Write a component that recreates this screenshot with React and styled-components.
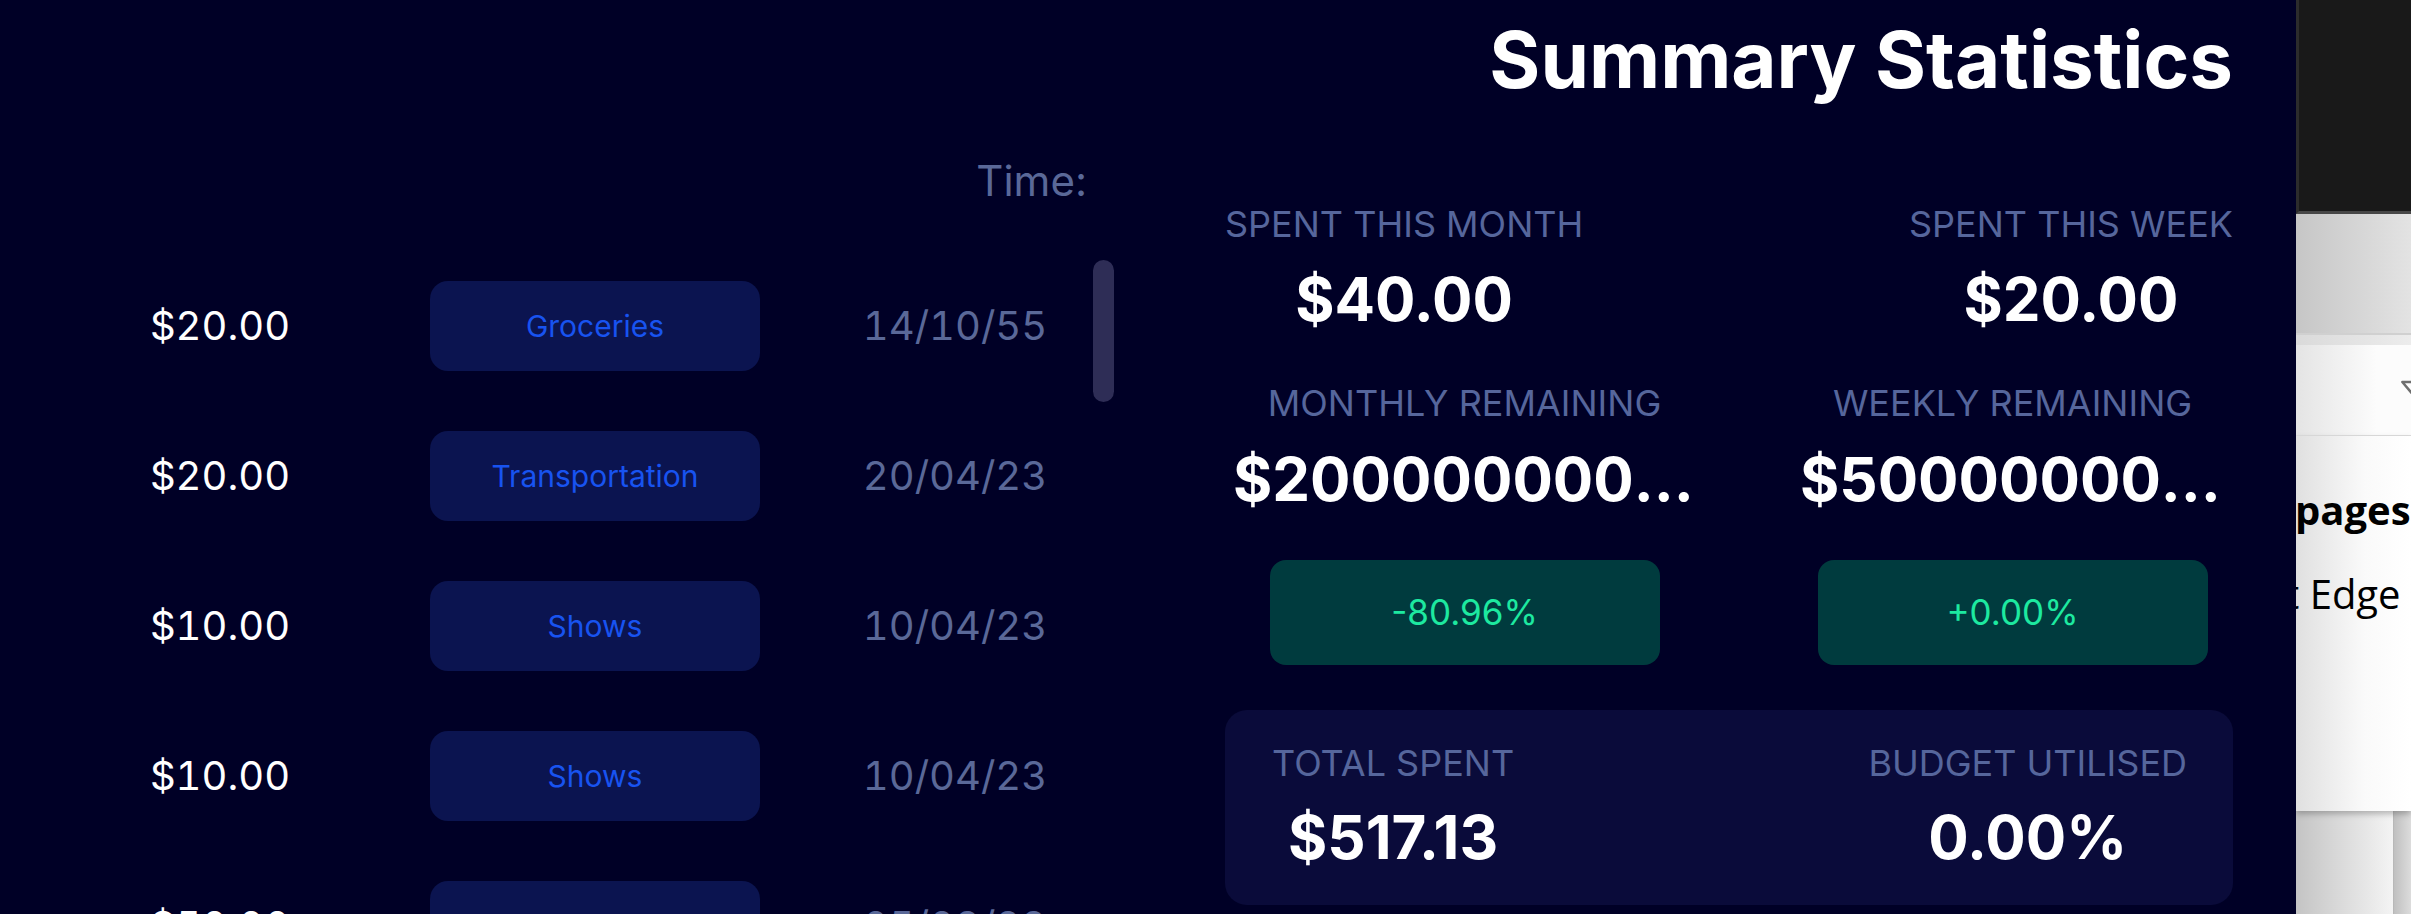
import React from "react";
import styled, { createGlobalStyle } from "styled-components";

const GlobalStyle = createGlobalStyle`
  html, body {
    margin: 0;
    padding: 0;
    background: #000026;
    overflow: hidden;
  }
  * { box-sizing: border-box; }
`;

const Screen = styled.div`
  display: flex;
  width: 2411px;
  height: 914px;
  overflow: hidden;
  font-family: Inter, "Liberation Sans", sans-serif;
`;

const Dashboard = styled.main`
  flex: 0 0 2296px;
  display: flex;
  height: 100%;
  background: #000026;
  color: #ffffff;
`;

const ListPanel = styled.section`
  flex: 0 0 1114px;
  display: flex;
  flex-direction: column;
  padding-top: 160px;
  height: 100%;
`;

const ListHeader = styled.div`
  display: flex;
  justify-content: flex-end;
  padding-right: 27px;
  font-size: 42px;
  line-height: 1;
  color: #5a6898;
`;

const ScrollFrame = styled.div`
  position: relative;
  margin-top: 58px;
  flex: 1;
  min-height: 0;
`;

const ScrollArea = styled.div`
  height: 100%;
  overflow-y: auto;
  scrollbar-width: none;
  &::-webkit-scrollbar {
    display: none;
  }
`;

const ScrollThumb = styled.div`
  position: absolute;
  top: 0;
  right: 0;
  width: 21px;
  height: 142px;
  border-radius: 11px;
  background: #2e2d56;
`;

const RowList = styled.div`
  display: flex;
  flex-direction: column;
  gap: 60px;
  padding: 21px 0 50px;
`;

const Row = styled.div`
  display: flex;
  align-items: center;
  height: 90px;
`;

const Amount = styled.div`
  flex: 0 0 400px;
  margin-left: 20px;
  text-align: center;
  font-size: 40px;
  line-height: 1;
  color: #ffffff;
  font-variant-numeric: tabular-nums;
`;

const CategoryBadge = styled.div`
  flex: 0 0 330px;
  height: 90px;
  margin-left: 10px;
  display: flex;
  align-items: center;
  justify-content: center;
  background: #0b1450;
  border-radius: 18px;
  color: #1853f0;
  font-size: 30px;
  line-height: 1;
`;

const DateCell = styled.div`
  flex: 0 0 270px;
  margin-left: 60px;
  text-align: center;
  font-size: 40px;
  line-height: 1;
  color: #5a6898;
  font-variant-numeric: tabular-nums;
`;

const StatsPanel = styled.section`
  flex: 0 0 1008px;
  margin-left: 111px;
  padding-top: 21px;
  display: flex;
  flex-direction: column;
`;

const Title = styled.h1`
  margin: 0;
  text-align: right;
  font-size: 78px;
  font-weight: 700;
  line-height: 1;
  color: #ffffff;
`;

const StatRow = styled.div`
  display: flex;
  justify-content: space-between;
  margin-top: ${(p) => p.$top}px;
  padding: ${(p) => p.$pad || "0"};
`;

const StatCell = styled.div`
  display: flex;
  flex-direction: column;
  align-items: center;
  width: ${(p) => (p.$width ? `${p.$width}px` : "auto")};
`;

const Label = styled.div`
  font-size: 36px;
  line-height: 1;
  color: #56669c;
  text-transform: uppercase;
  white-space: nowrap;
`;

const Value = styled.div`
  margin-top: ${(p) => p.$gap || 27}px;
  max-width: 100%;
  font-size: 60px;
  font-weight: 700;
  line-height: 1;
  color: #ffffff;
  white-space: nowrap;
  overflow: hidden;
  text-overflow: ellipsis;
`;

const ChangeBadge = styled.div`
  margin-top: 51px;
  width: 390px;
  height: 105px;
  display: flex;
  align-items: center;
  justify-content: center;
  background: #003b3e;
  border-radius: 16px;
  color: #1de9a0;
  font-size: 35px;
  line-height: 1;
`;

const TotalsCard = styled.div`
  margin-top: 45px;
  height: 195px;
  padding: 35px 46px 0 47px;
  display: flex;
  justify-content: space-between;
  align-items: flex-start;
  background: #0a0b3a;
  border-radius: 22px;
`;

const TotalsItem = styled.div`
  display: flex;
  flex-direction: column;
  align-items: center;
`;

/* background window peeking at the right edge */
const BackdropWindow = styled.aside`
  flex: 1;
  display: flex;
  flex-direction: column;
  height: 100%;
  overflow: hidden;
  font-family: "Open Sans", "Noto Sans", sans-serif;
  color: #000;
`;

const DarkTitleBar = styled.div`
  height: 214px;
  background: #191919;
  border-left: 3px solid #2c2c2c;
  border-bottom: 3px solid #474747;
`;

const GrayBar = styled.div`
  height: 119px;
  background: linear-gradient(to right, #c6c6c6, #e3e3e3);
`;

const Band = styled.div`
  height: 12px;
  background: linear-gradient(to right, #dadada, #ececec);
  border-top: 2px solid #d0d0d0;
`;

const Toolbar = styled.div`
  height: 91px;
  display: flex;
  align-items: flex-start;
  padding: 32px 0 0 103px;
  overflow: hidden;
  background: linear-gradient(to right, #e4e4e4, #fcfcfc 70%);
  border-bottom: 1px solid #dedede;
  color: #6e6e6e;
`;

const ToolIcon = styled.svg`
  flex: 0 0 auto;
  width: 40px;
  height: 40px;
`;

const DocContent = styled.div`
  height: 375px;
  padding-top: 54px;
  overflow: hidden;
  background: linear-gradient(to right, #e0e0e0, #fafafa 60%, #ffffff);
  box-shadow: 0 3px 6px rgba(0, 0, 0, 0.25);
  position: relative;
  z-index: 1;
`;

const DocHeading = styled.div`
  margin-left: -1px;
  font-size: 40px;
  font-weight: 700;
  line-height: 1;
  white-space: nowrap;
`;

const DocText = styled.div`
  margin-top: 44px;
  margin-left: -11px;
  font-size: 40px;
  line-height: 1;
  white-space: nowrap;
`;

const BottomStrip = styled.div`
  flex: 1;
  display: flex;
`;

const BottomLeft = styled.div`
  flex: 0 0 98px;
  background: linear-gradient(to right, #c4c4c4, #f4f4f4);
  border-right: 1px solid #b8b8b8;
`;

const BottomRight = styled.div`
  flex: 1;
  background: linear-gradient(to right, #c0c0c0, #dcdcdc);
`;

const transactions = [
  { amount: "$20.00", category: "Groceries", date: "14/10/55" },
  { amount: "$20.00", category: "Transportation", date: "20/04/23" },
  { amount: "$10.00", category: "Shows", date: "10/04/23" },
  { amount: "$10.00", category: "Shows", date: "10/04/23" },
  { amount: "$50.00", category: "Food", date: "05/03/23" },
  { amount: "$15.00", category: "Food", date: "02/03/23" },
  { amount: "$32.50", category: "Groceries", date: "28/02/23" },
  { amount: "$12.00", category: "Transportation", date: "25/02/23" },
  { amount: "$45.00", category: "Shows", date: "20/02/23" },
  { amount: "$8.99", category: "Food", date: "18/02/23" },
  { amount: "$60.00", category: "Groceries", date: "14/02/23" },
  { amount: "$22.40", category: "Transportation", date: "10/02/23" },
  { amount: "$30.00", category: "Shows", date: "07/02/23" },
  { amount: "$18.75", category: "Food", date: "03/02/23" },
  { amount: "$40.00", category: "Groceries", date: "30/01/23" },
  { amount: "$25.00", category: "Transportation", date: "26/01/23" },
  { amount: "$19.99", category: "Shows", date: "21/01/23" },
  { amount: "$27.50", category: "Food", date: "17/01/23" },
  { amount: "$30.00", category: "Groceries", date: "12/01/23" },
  { amount: "$20.00", category: "Transportation", date: "08/01/23" },
];

const FilterIcon = () => (
  <ToolIcon viewBox="0 0 24 24" fill="none" stroke="currentColor"
    strokeWidth="1.5" strokeLinejoin="round" strokeLinecap="round">
    <polygon points="22 3 2 3 10 12.46 10 19 14 21 14 12.46 22 3" />
  </ToolIcon>
);

export default function App() {
  return (
    <>
      <GlobalStyle />
      <Screen>
        <Dashboard>
          <ListPanel>
            <ListHeader>Time:</ListHeader>
            <ScrollFrame>
              <ScrollArea>
                <RowList>
                  {transactions.map((t, i) => (
                    <Row key={i}>
                      <Amount>{t.amount}</Amount>
                      <CategoryBadge>{t.category}</CategoryBadge>
                      <DateCell>{t.date}</DateCell>
                    </Row>
                  ))}
                </RowList>
              </ScrollArea>
              <ScrollThumb />
            </ScrollFrame>
          </ListPanel>

          <StatsPanel>
            <Title>Summary Statistics</Title>

            <StatRow $top={107}>
              <StatCell>
                <Label>Spent this month</Label>
                <Value>$40.00</Value>
              </StatCell>
              <StatCell>
                <Label>Spent this week</Label>
                <Value>$20.00</Value>
              </StatCell>
            </StatRow>

            <StatRow $top={56} $pad="0 8px 0 8px">
              <StatCell $width={463}>
                <Label>Monthly remaining</Label>
                <Value $gap={28}>$2000000000.00</Value>
                <ChangeBadge>-80.96%</ChangeBadge>
              </StatCell>
              <StatCell $width={425}>
                <Label>Weekly remaining</Label>
                <Value $gap={28}>$500000000.00</Value>
                <ChangeBadge>+0.00%</ChangeBadge>
              </StatCell>
            </StatRow>

            <TotalsCard>
              <TotalsItem>
                <Label>Total spent</Label>
                <Value $gap={26}>$517.13</Value>
              </TotalsItem>
              <TotalsItem>
                <Label>Budget utilised</Label>
                <Value $gap={26}>0.00%</Value>
              </TotalsItem>
            </TotalsCard>
          </StatsPanel>
        </Dashboard>

        <BackdropWindow>
          <DarkTitleBar />
          <GrayBar />
          <Band />
          <Toolbar>
            <FilterIcon />
          </Toolbar>
          <DocContent>
            <DocHeading>pages</DocHeading>
            <DocText>t Edge c</DocText>
          </DocContent>
          <BottomStrip>
            <BottomLeft />
            <BottomRight />
          </BottomStrip>
        </BackdropWindow>
      </Screen>
    </>
  );
}
